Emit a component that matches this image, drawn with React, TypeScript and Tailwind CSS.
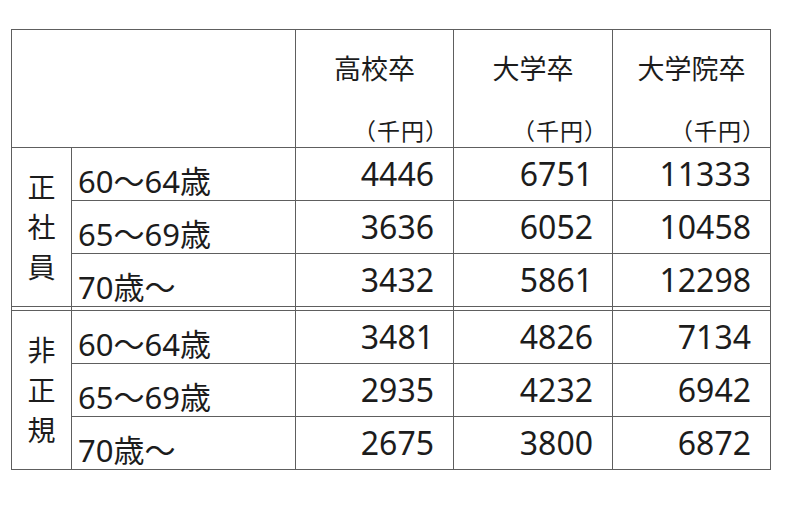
import React from 'react';

type Row = { label: string; values: [string, string, string] };

const GROUPS: { name: string[]; rows: Row[] }[] = [
  {
    name: ['正', '社', '員'],
    rows: [
      { label: '60～64歳', values: ['4446', '6751', '11333'] },
      { label: '65～69歳', values: ['3636', '6052', '10458'] },
      { label: '70歳～', values: ['3432', '5861', '12298'] },
    ],
  },
  {
    name: ['非', '正', '規'],
    rows: [
      { label: '60～64歳', values: ['3481', '4826', '7134'] },
      { label: '65～69歳', values: ['2935', '4232', '6942'] },
      { label: '70歳～', values: ['2675', '3800', '6872'] },
    ],
  },
];

const HEADERS = ['高校卒', '大学卒', '大学院卒'];

const cell = 'border border-[#5e5e5e] p-0';

const App: React.FC = () => {
  return (
    <div
      className="w-[800px] h-[509px] bg-white text-[#1c1c1c] pt-[29px] pl-[11px]"
      style={{ fontFamily: '"Noto Sans", "Noto Sans CJK JP", sans-serif' }}
    >
      <table className="border-collapse table-fixed w-[760px]">
        <colgroup>
          <col className="w-[60px]" />
          <col className="w-[224px]" />
          <col className="w-[158px]" />
          <col className="w-[159px]" />
          <col className="w-[158px]" />
        </colgroup>
        <thead>
          <tr className="h-[118px]">
            <th colSpan={2} className={cell} />
            {HEADERS.map(h => (
              <th key={h} className={`${cell} font-normal align-top`}>
                <div className="flex flex-col h-[117px]">
                  <div className="pt-[25px] text-center text-[27px] leading-none">{h}</div>
                  <div className="mt-auto pb-[4px] pr-[4px] text-right text-[23px] tracking-[1px] leading-none">（千円）</div>
                </div>
              </th>
            ))}
          </tr>
        </thead>
        <tbody>
          {GROUPS.map((g, gi) => (
            <React.Fragment key={gi}>
              {gi > 0 && (
                <tr className="h-[4px]">
                  {[0, 1, 2, 3, 4].map(i => (
                    <td key={i} className={cell} />
                  ))}
                </tr>
              )}
              {g.rows.map((r, ri) => (
                <tr key={ri} className="h-[53px]">
                  {ri === 0 && (
                    <td rowSpan={3} className={`${cell} text-center align-middle text-[28px] leading-[40px]`}>
                      {g.name.map(c => (
                        <div key={c}>{c}</div>
                      ))}
                    </td>
                  )}
                  <td className={`${cell} align-bottom pl-[6px] pb-[3px] text-[31px] leading-none`}>{r.label}</td>
                  {r.values.map((v, vi) => (
                    <td key={vi} className={`${cell} align-middle text-right pr-[19px] text-[32px] leading-none`}>
                      {v}
                    </td>
                  ))}
                </tr>
              ))}
            </React.Fragment>
          ))}
        </tbody>
      </table>
    </div>
  );
};

export default App;
